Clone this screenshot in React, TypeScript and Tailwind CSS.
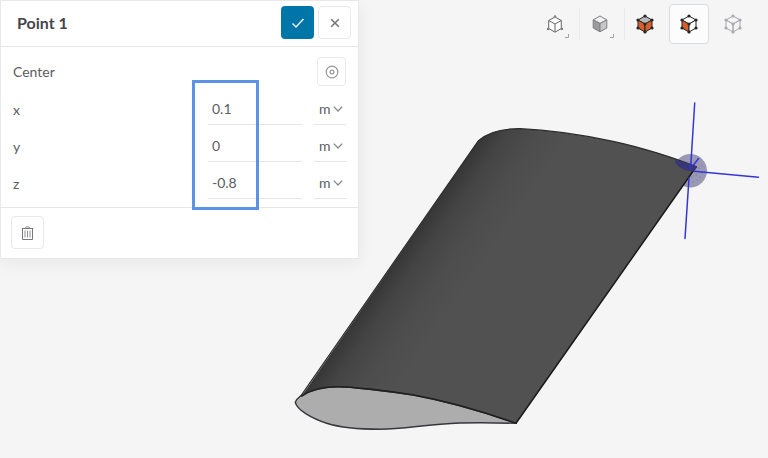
import React, { useState } from 'react';

const axes = [
  { name: 'x', initial: '0.1' },
  { name: 'y', initial: '0' },
  { name: 'z', initial: '-0.8' },
];

const vertices = [
  [12, 4],
  [19, 8],
  [19, 16],
  [12, 20],
  [5, 16],
  [5, 8],
  [12, 12],
];

type CubeProps = { top?: string; left?: string; right?: string; stroke: string };

const DottedCube: React.FC<CubeProps> = ({ top = 'none', left = 'none', right = 'none', stroke }) => (
  <svg viewBox="0 0 24 24" className="size-6" stroke={stroke} strokeLinejoin="round" aria-hidden="true">
    <path d="M12 4 19 8 12 12 5 8Z" fill={top} />
    <path d="M5 8 12 12V20L5 16Z" fill={left} />
    <path d="M19 8 12 12V20L19 16Z" fill={right} />
    {vertices.map(([cx, cy]) => (
      <circle key={`${cx}-${cy}`} cx={cx} cy={cy} r="1.6" fill={stroke} stroke="none" />
    ))}
  </svg>
);

const ShadedCube = () => (
  <svg viewBox="0 0 24 24" className="size-6" stroke="#808084" strokeLinejoin="round" aria-hidden="true">
    <path d="M12 4 18.800 7.800 12 11.500 5.200 7.800Z" fill="#f0f0f0" />
    <path d="M5.200 7.800 12 11.500V19.800L5.200 16Z" fill="#9b9b9b" />
    <path d="M18.800 7.800 12 11.500V19.800L18.800 16Z" fill="#c6c6c6" />
  </svg>
);

const WireCube = () => (
  <svg viewBox="0 0 24 24" className="size-6" fill="none" stroke="#66666a" strokeLinejoin="round" aria-hidden="true">
    <path d="M12 5 18.300 8.500V16.500L12 20.200 5.700 16.500V8.500Z" fill="#fdfdfd" />
    <path d="M5.700 8.500 12 12 18.300 8.500M12 12V20" />
    <path d="M12 5V3.500M5.700 16.500 4.500 17.300M18.300 16.500 19.500 17.300" />
    <path d="M10.800 4.800 12 3.500 13.200 4.800M4.600 15.800 4.300 17.500H6.200M19.400 15.800 19.700 17.500H17.800" strokeWidth="0.8" />
  </svg>
);

const Corner = () => (
  <svg viewBox="0 0 4 4" className="absolute right-1.5 bottom-1.5 size-1" aria-hidden="true">
    <path d="M3.500 0V3.500H0" fill="none" stroke="#a3a3a3" />
  </svg>
);

const Separator = () => <span className="ml-1 h-8 w-px bg-[#e9e9e9]" />;

type ToolProps = { label: string; active?: boolean; menu?: boolean; children: React.ReactNode };

const Tool: React.FC<ToolProps> = ({ label, active, menu, children }) => (
  <button
    type="button"
    aria-label={label}
    aria-pressed={active}
    className={
      active
        ? 'relative flex size-10 items-center justify-center rounded border border-[#d3dde6] bg-[#fcfcfc]'
        : 'relative flex size-10 items-center justify-center rounded'
    }
  >
    {children}
    {menu && <Corner />}
  </button>
);

const Toolbar = () => (
  <div className="flex items-center gap-1 pt-1 pr-[15px]">
    <div className="flex items-center">
      <Tool label="Wireframe" menu>
        <WireCube />
      </Tool>
      <Separator />
      <Tool label="Shaded" menu>
        <ShadedCube />
      </Tool>
      <Separator />
      <Tool label="Select volumes">
        <DottedCube top="#b9b9b9" left="#d65f2b" right="#d65f2b" stroke="#252525" />
      </Tool>
    </div>
    <Tool label="Select faces" active>
      <DottedCube top="#ffffff" left="#d65f2b" right="#ffffff" stroke="#252525" />
    </Tool>
    <Tool label="Select vertices">
      <DottedCube stroke="#aaa8b2" />
    </Tool>
  </div>
);

const Viewport = () => (
  <svg
    viewBox="0 0 768 458"
    className="absolute inset-0 size-full"
    fill="none"
    strokeLinejoin="round"
    strokeLinecap="round"
    role="img"
    aria-label="Wing model with point marker"
  >
    <defs>
      <linearGradient id="skin" gradientUnits="userSpaceOnUse" x1="390" y1="268" x2="452" y2="311">
        <stop offset="0" stopColor="#363636" />
        <stop offset="0.25" stopColor="#444444" />
        <stop offset="0.6" stopColor="#4d4d4d" />
        <stop offset="1" stopColor="#515151" />
      </linearGradient>
      <clipPath id="trailing">
        <path d="M660 150 696 167 694 171 640 248V280H768V90H660Z" />
      </clipPath>
    </defs>
    {/* marker disc, partly hidden by the wing */}
    <circle cx="690.3" cy="170.7" r="16.700" fill="#9a99b3" />
    <path
      d="M478.500 140.700C486 134 500 128.500 520 128.700C550 130 590 136.500 613 141.300C640 147 675 158 696 166.700L516 423.300L338 387L301.700 396Z"
      fill="url(#skin)"
    />
    <path d="M299 398.500 478.500 140.700C486 134 500 128.500 520 128.700C550 130 590 136.500 613 141.300C640 147 675 158 696 166.700" stroke="#2c2c2c" strokeWidth="1.300" />
    <path d="M696 167 516 423.300" stroke="#191919" strokeWidth="1.500" />
    <path
      d="M295.300 402.300C298 394 318 386.700 338.300 386.700C350 386.700 385 390.500 413.300 395C446 401 487 413 516 423.300C490 422.600 475 422.700 460 423C425 424.500 405 429 380 429.300C360 429.300 340 427.500 326.700 423.300C312 418.500 297 410 295.300 402.300Z"
      fill="#adadad"
      stroke="#37373c"
      strokeWidth="1.500"
    />
    <path d="M301.700 396C312 389 327 386.700 338.300 386.700C350 386.700 385 390.500 413.300 395C446 401 487 413 516 423.300" stroke="#202020" strokeWidth="1.600" />
    <path d="M675 159.500C681 161.500 690 163.500 697 166.500C697 168 695 170 692.500 171.500C684 171 674 165.500 675 159.500Z" fill="#38377a" />
    <g clipPath="url(#trailing)" stroke="#3535d5" strokeWidth="1.500">
      <path d="M694.700 103 691 162" />
      <path d="M694 171.300 758.500 177.300" />
    </g>
    <g stroke="#3535d5" strokeWidth="1.500">
      <path d="M691 162 690.500 169" />
      <path d="M693.500 165 698.500 158.500" />
      <path d="M689 178 685 238.500" />
    </g>
    <path d="M699 168h.1M702 166h.1M696 175h.1M700 177h.1M697 180h.1M693 182h.1M702 173h.1M692 177h.1" stroke="#5555c8" strokeWidth="0.8" />
  </svg>
);

const PointPanel = () => {
  const [values, setValues] = useState(axes.map((a) => a.initial));

  return (
    <form className="relative w-[359px] max-w-full border border-[#e8e8e8] bg-white shadow-[0_4px_16px_rgba(0,0,0,0.06)]">
      <header className="flex items-center justify-between border-b border-[#e6e6e6] pt-[5px] pr-[7px] pb-[7px] pl-4">
        <h1 className="text-base font-bold text-[#45454a]">Point 1</h1>
        <div className="flex gap-1">
          <button type="button" aria-label="Apply" className="flex size-[33px] items-center justify-center rounded bg-[#0076a8]">
            <svg viewBox="0 0 14 14" className="size-3.5" fill="none" stroke="#e8f3fa" strokeWidth="1.500" aria-hidden="true">
              <path d="M1.500 7.500 5 11 12.500 3" />
            </svg>
          </button>
          <button type="button" aria-label="Close" className="flex size-[33px] items-center justify-center rounded border border-[#e9e9e9] bg-white">
            <svg viewBox="0 0 14 14" className="size-3.5" stroke="#77777b" strokeWidth="1.600" aria-hidden="true">
              <path d="M3.200 3.200 10.800 10.800M10.800 3.200 3.200 10.800" />
            </svg>
          </button>
        </div>
      </header>

      <div className="border-b border-[#e6e6e6] px-3 pt-2.5 pb-2 text-sm text-[#5c5c61]">
        <div className="mb-0.5 flex items-center justify-between">
          <span>Center</span>
          <button type="button" aria-label="Pick center" className="flex size-[29px] items-center justify-center rounded border border-[#e9e9e9]">
            <svg viewBox="0 0 14 14" className="size-3.5" fill="none" stroke="#97979b" strokeWidth="1.200" aria-hidden="true">
              <circle cx="7" cy="7" r="5.800" />
              <circle cx="7" cy="7" r="1.900" />
            </svg>
          </button>
        </div>
        {axes.map((axis, i) => (
          <div key={axis.name} className="flex h-[37px] items-stretch gap-3">
            <label htmlFor={axis.name} className="flex flex-1 items-center pt-1.5">
              {axis.name}
            </label>
            <input
              id={axis.name}
              value={values[i]}
              onChange={(e) => setValues(values.map((v, j) => (j === i ? e.target.value : v)))}
              className="w-[94px] border-b border-[#e6e6e6] px-1 pt-1.5 outline-none"
            />
            <div className="relative w-8 border-b border-[#e6e6e6]">
              <select aria-label={`${axis.name} unit`} className="size-full appearance-none bg-transparent pt-1.5 pl-[5px] outline-none">
                <option>m</option>
              </select>
              <svg viewBox="0 0 10 6" className="pointer-events-none absolute right-[3px] bottom-3 h-1.5 w-2.5" fill="none" stroke="#88888c" strokeWidth="1.300" aria-hidden="true">
                <path d="M.8 .6 5 5 9.200 .6" />
              </svg>
            </div>
          </div>
        ))}
      </div>

      <footer className="px-2.5 pt-2 pb-[9px]">
        <button type="button" aria-label="Delete" className="flex size-[33px] items-center justify-center rounded border border-[#e9e9e9]">
          <svg viewBox="0 0 14 16" className="h-4 w-3.5" fill="none" stroke="#77777c" aria-hidden="true">
            <path d="M.8 3.500H12.200M4 3.500C4.500 1.300 8.500 1.300 9 3.500M1.500 3.500V14.500H11.500V3.500" />
            <path d="M4 5.500V12.500M6.500 5.500V12.500M9 5.500V12.500" stroke="#8c8c94" />
          </svg>
        </button>
      </footer>

      {/* callout around the coordinate values */}
      <div className="pointer-events-none absolute top-[79px] left-[191px] h-[130px] w-[67px] border-3 border-[#5c93e6]" />
    </form>
  );
};

export default function App() {
  return (
    <main className="relative min-h-screen overflow-hidden bg-[#f5f5f5] font-['Lato',sans-serif]">
      <Viewport />
      <div className="relative flex items-start justify-between">
        <PointPanel />
        <Toolbar />
      </div>
    </main>
  );
}
